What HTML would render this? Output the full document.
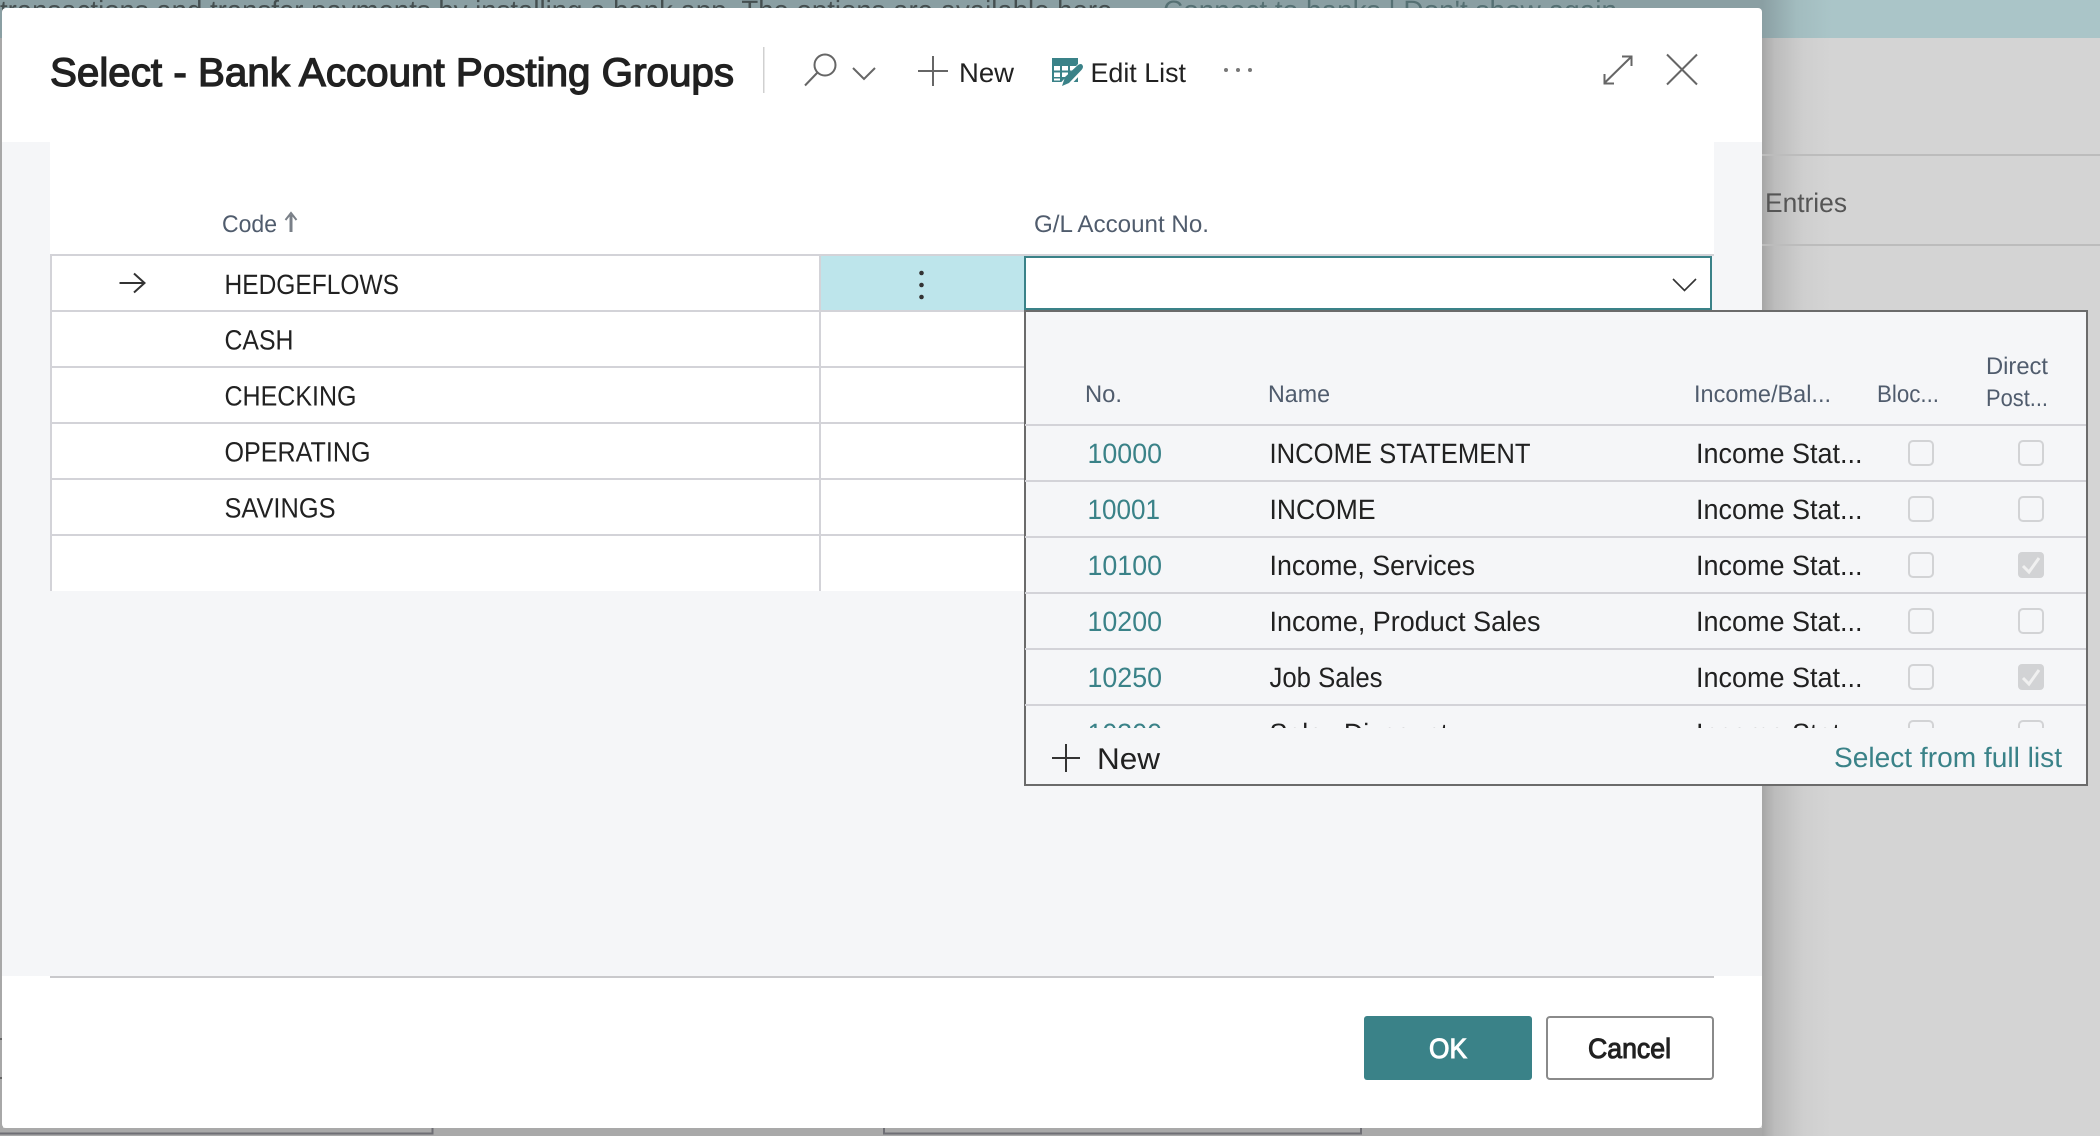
<!DOCTYPE html>
<html lang="en"><head><meta charset="utf-8"><title>Select - Bank Account Posting Groups</title>
<style>
html,body{margin:0;padding:0;width:2100px;height:1136px;overflow:hidden;background:#d4d4d4}
svg{display:block}
text{font-family:"Liberation Sans",Arial,sans-serif;text-rendering:geometricPrecision}
.r{font-size:28px;fill:#212121}
.h{font-size:24px;fill:#505c6d}
.l{font-size:28px;fill:#3a8288}
.t{font-size:27px;fill:#212121}
.i{fill:none;stroke:#666;stroke-width:2}
.c{fill:none;stroke:#d2d3d5;stroke-width:2}
.g{fill:#d3d3d8}
</style></head><body>
<svg width="2100" height="1136" viewBox="0 0 2100 1136" xmlns="http://www.w3.org/2000/svg">
<defs>
<linearGradient id="sb" x1="0" x2="1" y1="0" y2="0"><stop offset="0" stop-color="#a6a6a6"/><stop offset=".18" stop-color="#bcbcbc"/><stop offset=".6" stop-color="#cfcfcf"/><stop offset="1" stop-color="#d4d4d4"/></linearGradient>
<linearGradient id="st" x1="0" x2="1" y1="0" y2="0"><stop offset="0" stop-color="#8a9fa3"/><stop offset=".5" stop-color="#a2bcbf"/><stop offset="1" stop-color="#aac5c8"/></linearGradient>
<clipPath id="dc"><rect x="1025" y="312" width="1061" height="416"/></clipPath>
</defs>

<!-- page behind -->
<rect width="2100" height="1136" fill="#d4d4d4"/>
<rect width="2100" height="38" fill="#aac5c8"/>
<rect width="1762" height="38" fill="#8a9fa3"/>
<rect x="1762" width="70" height="38" fill="url(#st)"/>
<rect x="1762" y="38" width="70" height="1098" fill="url(#sb)"/>
<rect x="1762" y="154" width="338" height="2" fill="#bcbcbc"/>
<rect x="1762" y="244" width="338" height="2" fill="#bcbcbc"/>
<text x="1765" y="212" textLength="82" lengthAdjust="spacingAndGlyphs" font-size="27" fill="#555">Entries</text>
<rect y="38" width="3" height="1098" fill="#a8a8a8"/>
<rect y="1128" width="1762" height="8" fill="#a9a9a9"/>
<text x="0" y="20" textLength="1120" lengthAdjust="spacingAndGlyphs" font-size="28" fill="#454f50">transactions and transfer payments by installing a bank app. The options are available here.</text>
<text x="1163" y="20" textLength="454" lengthAdjust="spacingAndGlyphs" font-size="28" fill="#557073">Connect to banks | Don't show again</text>
<path d="M0 1133.500H432.500V1128M884 1128V1133.500H1361V1128" fill="none" stroke="#6f6f75" stroke-width="2"/>
<rect y="1038" width="2" height="2" fill="#666"/><rect y="1077" width="2" height="2" fill="#666"/>

<!-- dialog -->
<rect x="2" y="8" width="1760" height="1120" rx="4" fill="#fff"/>
<rect x="2" y="142" width="1760" height="834" fill="#f5f6f8"/>
<rect x="50" y="142" width="1664" height="112" fill="#fff"/>
<rect x="50" y="976" width="1664" height="2" fill="#c9c9cc"/>

<text x="50" y="86" textLength="684" lengthAdjust="spacingAndGlyphs" font-size="40" stroke="#212121" stroke-width="1.300" fill="#212121">Select - Bank Account Posting Groups</text>
<rect x="763" y="47" width="1.500" height="46" fill="#d0d0d0"/>

<!-- toolbar -->
<circle cx="825" cy="65" r="10.500" class="i"/>
<path d="M817.500 72.500L805 85.500" class="i"/>
<path d="M853 68L864 79L875 68" class="i" stroke-width="1.500"/>
<path d="M918 71H948M933 56V86" class="i"/>
<text x="959" y="82" textLength="55" lengthAdjust="spacingAndGlyphs" class="t">New</text>
<rect x="1052" y="58" width="26" height="24" fill="#3a8288"/>
<path d="M1054 66H1060V70.500H1054ZM1062 66H1068V70.500H1062ZM1070 66H1076V70.500H1070ZM1054 72.500H1060V77H1054ZM1062 72.500H1068V77H1062Z M1054 78.500H1060V80.500H1054Z" fill="#fff"/>
<path d="M1062 88L1084 64" stroke="#fff" stroke-width="9" fill="none"/>
<path d="M1062 86L1065 77L1078 65Q1082 62.500 1083 66.500Q1083 68.500 1081 70.500L1069 83Z" fill="#3a8288"/>
<text x="1090.500" y="82" textLength="95.500" lengthAdjust="spacingAndGlyphs" class="t">Edit List</text>
<circle cx="1226" cy="70" r="2" fill="#777"/><circle cx="1238" cy="70" r="2" fill="#777"/><circle cx="1250" cy="70" r="2" fill="#777"/>
<path d="M1605 82.500L1631 57M1622 56.500H1631.500V66M1604.500 74V83.500H1614" class="i" stroke-width="2"/>
<path d="M1667 54.500L1697 84.500M1697 54.500L1667 84.500" class="i" stroke-width="3"/>

<!-- table -->
<text x="222" y="232" textLength="55" lengthAdjust="spacingAndGlyphs" class="h">Code</text>
<path d="M291 232V215" fill="none" stroke="#7a8088" stroke-width="3"/>
<path d="M285.500 220L291 213L296.500 220" fill="none" stroke="#7a8088" stroke-width="2"/>
<text x="1034" y="232" textLength="175" lengthAdjust="spacingAndGlyphs" class="h">G/L Account No.</text>

<rect x="51" y="254" width="974" height="337" fill="#fff"/>
<rect x="820" y="256" width="205" height="54" fill="#bde5eb"/>
<rect x="50" y="254" width="2" height="337" class="g"/>
<rect x="819" y="254" width="2" height="337" class="g"/>
<rect x="50" y="254" width="1664" height="2" class="g"/>
<rect x="50" y="310" width="975" height="2" class="g"/>
<rect x="50" y="366" width="975" height="2" class="g"/>
<rect x="50" y="422" width="975" height="2" class="g"/>
<rect x="50" y="478" width="975" height="2" class="g"/>
<rect x="50" y="534" width="975" height="2" class="g"/>

<path d="M119.500 283H144M134 273.500L144.500 283L134 292.500" fill="none" stroke="#333" stroke-width="2"/>
<text x="224.500" y="294" textLength="174.500" lengthAdjust="spacingAndGlyphs" class="r">HEDGEFLOWS</text>
<text x="224.500" y="349.500" textLength="69" lengthAdjust="spacingAndGlyphs" class="r">CASH</text>
<text x="224.500" y="405.500" textLength="132" lengthAdjust="spacingAndGlyphs" class="r">CHECKING</text>
<text x="224.500" y="461.500" textLength="146" lengthAdjust="spacingAndGlyphs" class="r">OPERATING</text>
<text x="224.500" y="517.500" textLength="111" lengthAdjust="spacingAndGlyphs" class="r">SAVINGS</text>
<circle cx="921.500" cy="273" r="2.300" fill="#333"/><circle cx="921.500" cy="285" r="2.300" fill="#333"/><circle cx="921.500" cy="297" r="2.300" fill="#333"/>

<rect x="1025" y="257" width="686" height="52" fill="#fff" stroke="#3a8288" stroke-width="2"/>
<path d="M1673 279L1684.500 290.500L1696 279" fill="none" stroke="#333" stroke-width="1.600"/>

<!-- dropdown -->
<rect x="1025" y="311" width="1062" height="474" fill="#f5f6f8" stroke="#6b6b6b" stroke-width="2"/>
<text x="1085" y="402" textLength="37" lengthAdjust="spacingAndGlyphs" class="h">No.</text>
<text x="1268" y="402" textLength="62" lengthAdjust="spacingAndGlyphs" class="h">Name</text>
<text x="1694" y="402" textLength="137" lengthAdjust="spacingAndGlyphs" class="h">Income/Bal...</text>
<text x="1877" y="402" textLength="62" lengthAdjust="spacingAndGlyphs" class="h">Bloc...</text>
<text x="1986" y="374" textLength="62" lengthAdjust="spacingAndGlyphs" class="h">Direct</text>
<text x="1986" y="406" textLength="62" lengthAdjust="spacingAndGlyphs" class="h">Post...</text>

<rect x="1025" y="424" width="1061" height="2" class="g"/>
<rect x="1025" y="480" width="1061" height="2" class="g"/>
<rect x="1025" y="536" width="1061" height="2" class="g"/>
<rect x="1025" y="592" width="1061" height="2" class="g"/>
<rect x="1025" y="648" width="1061" height="2" class="g"/>
<rect x="1025" y="704" width="1061" height="2" class="g"/>

<g clip-path="url(#dc)">
<text x="1087.500" y="463" textLength="74.500" lengthAdjust="spacingAndGlyphs" class="l">10000</text>
<text x="1087.500" y="519" textLength="72.500" lengthAdjust="spacingAndGlyphs" class="l">10001</text>
<text x="1087.500" y="575" textLength="74.500" lengthAdjust="spacingAndGlyphs" class="l">10100</text>
<text x="1087.500" y="631" textLength="74.500" lengthAdjust="spacingAndGlyphs" class="l">10200</text>
<text x="1087.500" y="687" textLength="74.500" lengthAdjust="spacingAndGlyphs" class="l">10250</text>
<text x="1087.500" y="743" textLength="74.500" lengthAdjust="spacingAndGlyphs" class="l">10300</text>
<text x="1269.500" y="463" textLength="261" lengthAdjust="spacingAndGlyphs" class="r">INCOME STATEMENT</text>
<text x="1269.500" y="519" textLength="106" lengthAdjust="spacingAndGlyphs" class="r">INCOME</text>
<text x="1269.500" y="575" textLength="205.500" lengthAdjust="spacingAndGlyphs" class="r">Income, Services</text>
<text x="1269.500" y="631" textLength="271" lengthAdjust="spacingAndGlyphs" class="r">Income, Product Sales</text>
<text x="1269.500" y="687" textLength="113" lengthAdjust="spacingAndGlyphs" class="r">Job Sales</text>
<text x="1269.500" y="743" textLength="192" lengthAdjust="spacingAndGlyphs" class="r">Sales Discounts</text>
<text x="1696" y="463" textLength="166.500" lengthAdjust="spacingAndGlyphs" class="r">Income Stat...</text>
<text x="1696" y="519" textLength="166.500" lengthAdjust="spacingAndGlyphs" class="r">Income Stat...</text>
<text x="1696" y="575" textLength="166.500" lengthAdjust="spacingAndGlyphs" class="r">Income Stat...</text>
<text x="1696" y="631" textLength="166.500" lengthAdjust="spacingAndGlyphs" class="r">Income Stat...</text>
<text x="1696" y="687" textLength="166.500" lengthAdjust="spacingAndGlyphs" class="r">Income Stat...</text>
<text x="1696" y="743" textLength="166.500" lengthAdjust="spacingAndGlyphs" class="r">Income Stat...</text>
<rect x="1909" y="441" width="24" height="24" rx="4" class="c"/>
<rect x="2019" y="441" width="24" height="24" rx="4" class="c"/>
<rect x="1909" y="497" width="24" height="24" rx="4" class="c"/>
<rect x="2019" y="497" width="24" height="24" rx="4" class="c"/>
<rect x="1909" y="553" width="24" height="24" rx="4" class="c"/>
<rect x="2018" y="552" width="26" height="26" rx="4" fill="#d2d3d5"/>
<path d="M2023 566L2029 572L2039 558" fill="none" stroke="#f0f0f0" stroke-width="3"/>
<rect x="1909" y="609" width="24" height="24" rx="4" class="c"/>
<rect x="2019" y="609" width="24" height="24" rx="4" class="c"/>
<rect x="1909" y="665" width="24" height="24" rx="4" class="c"/>
<rect x="2018" y="664" width="26" height="26" rx="4" fill="#d2d3d5"/>
<path d="M2023 678L2029 684L2039 670" fill="none" stroke="#f0f0f0" stroke-width="3"/>
<rect x="1909" y="721" width="24" height="24" rx="4" class="c"/>
<rect x="2019" y="721" width="24" height="24" rx="4" class="c"/>
</g>

<path d="M1052 758H1080M1066 744V772" fill="none" stroke="#333" stroke-width="2"/>
<text x="1097" y="769" textLength="63" lengthAdjust="spacingAndGlyphs" font-size="30" fill="#212121">New</text>
<text x="1834" y="767" textLength="228" lengthAdjust="spacingAndGlyphs" class="l">Select from full list</text>

<!-- buttons -->
<rect x="1364" y="1016" width="168" height="64" rx="3" fill="#3a8288"/>
<text x="1429" y="1058" textLength="38" lengthAdjust="spacingAndGlyphs" font-size="28" stroke="#fff" stroke-width="1" fill="#fff">OK</text>
<rect x="1547" y="1017" width="166" height="62" rx="3" fill="#fff" stroke="#8a8a8a" stroke-width="2"/>
<text x="1588" y="1058" textLength="83" lengthAdjust="spacingAndGlyphs" font-size="28" stroke="#212121" stroke-width="1" fill="#212121">Cancel</text>
</svg>
</body></html>
